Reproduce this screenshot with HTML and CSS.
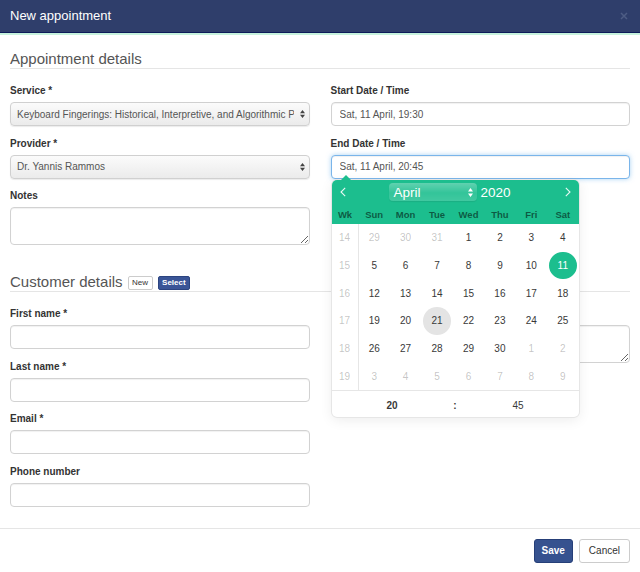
FILE: index.html
```html
<!DOCTYPE html>
<html lang="en">
<head>
<meta charset="utf-8">
<title>New appointment</title>
<link rel="stylesheet" href="styles.css">
</head>
<body>
<div class="modal">
  <header class="modal-header">
    <h1 class="modal-title">New appointment</h1>
    <button class="close" type="button" aria-label="Close">
      <svg width="8" height="8" viewBox="0 0 8 8"><path d="M1 1L7 7M7 1L1 7" stroke="#4d5c84" stroke-width="1.5" fill="none"/></svg>
    </button>
  </header>
  <div class="modal-body">
    <section class="section">
      <h2 class="section-title">Appointment details</h2>
      <div class="row">
        <div class="col">
          <div class="group">
            <label class="label">Service *</label>
            <div class="select-wrap">
              <select class="control select">
                <option>Keyboard Fingerings: Historical, Interpretive, and Algorithmic Perspectives</option>
              </select>
              <svg class="select-arrows" width="5" height="8" viewBox="0 0 5 8"><path d="M0 3.2L2.5 0L5 3.2Z M0 4.8L2.5 8L5 4.8Z" fill="#444"/></svg>
            </div>
          </div>
          <div class="group">
            <label class="label">Provider *</label>
            <div class="select-wrap">
              <select class="control select">
                <option>Dr. Yannis Rammos</option>
              </select>
              <svg class="select-arrows" width="5" height="8" viewBox="0 0 5 8"><path d="M0 3.2L2.5 0L5 3.2Z M0 4.8L2.5 8L5 4.8Z" fill="#444"/></svg>
            </div>
          </div>
          <div class="group">
            <label class="label">Notes</label>
            <textarea class="control textarea"></textarea>
          </div>
        </div>
        <div class="col">
          <div class="group">
            <label class="label">Start Date / Time</label>
            <input class="control" type="text" value="Sat, 11 April, 19:30">
          </div>
          <div class="group group-picker">
            <label class="label">End Date / Time</label>
            <input class="control focus" type="text" value="Sat, 11 April, 20:45">
            <div class="cal">
              <div class="cal-months">
                <span class="cal-nav">
                  <svg width="6" height="10" viewBox="0 0 6 10"><path d="M5.2 0.8L1 5L5.2 9.2" stroke="#fff" stroke-width="1.1" fill="none" opacity="0.9"/></svg>
                </span>
                <div class="cal-current">
                  <span class="cal-month">April
                    <svg width="5" height="9" viewBox="0 0 5 9"><path d="M0 3.6L2.5 0L5 3.6Z M0 5.4L2.5 9L5 5.4Z" fill="#fff"/></svg>
                  </span>
                  <span class="cal-year">2020</span>
                </div>
                <span class="cal-nav">
                  <svg width="6" height="10" viewBox="0 0 6 10"><path d="M0.8 0.8L5 5L0.8 9.2" stroke="#fff" stroke-width="1.1" fill="none" opacity="0.9"/></svg>
                </span>
              </div>
              <div class="cal-grid cal-weekdays">
                <span>Wk</span><span>Sun</span><span>Mon</span><span>Tue</span><span>Wed</span><span>Thu</span><span>Fri</span><span>Sat</span>
              </div>
              <div class="cal-grid cal-days">
                <span class="wk">14</span><span class="day muted">29</span><span class="day muted">30</span><span class="day muted">31</span><span class="day">1</span><span class="day">2</span><span class="day">3</span><span class="day">4</span>
                <span class="wk">15</span><span class="day">5</span><span class="day">6</span><span class="day">7</span><span class="day">8</span><span class="day">9</span><span class="day">10</span><span class="day"><b class="dot selected">11</b></span>
                <span class="wk">16</span><span class="day">12</span><span class="day">13</span><span class="day">14</span><span class="day">15</span><span class="day">16</span><span class="day">17</span><span class="day">18</span>
                <span class="wk">17</span><span class="day">19</span><span class="day">20</span><span class="day"><b class="dot hover">21</b></span><span class="day">22</span><span class="day">23</span><span class="day">24</span><span class="day">25</span>
                <span class="wk">18</span><span class="day">26</span><span class="day">27</span><span class="day">28</span><span class="day">29</span><span class="day">30</span><span class="day muted">1</span><span class="day muted">2</span>
                <span class="wk">19</span><span class="day muted">3</span><span class="day muted">4</span><span class="day muted">5</span><span class="day muted">6</span><span class="day muted">7</span><span class="day muted">8</span><span class="day muted">9</span>
              </div>
              <div class="cal-time">
                <span class="cal-hour">20</span>
                <span class="cal-sep">:</span>
                <span class="cal-min">45</span>
              </div>
            </div>
          </div>
        </div>
      </div>
    </section>
    <section class="section section-customer">
      <h2 class="section-title">Customer details
        <button class="btn-xs" type="button">New</button>
        <button class="btn-xs btn-xs-primary" type="button">Select</button>
      </h2>
      <div class="row">
        <div class="col">
          <div class="group">
            <label class="label">First name *</label>
            <input class="control" type="text">
          </div>
          <div class="group">
            <label class="label">Last name *</label>
            <input class="control" type="text">
          </div>
          <div class="group">
            <label class="label">Email *</label>
            <input class="control" type="text">
          </div>
          <div class="group">
            <label class="label">Phone number</label>
            <input class="control" type="text">
          </div>
        </div>
        <div class="col">
          <div class="group">
            <label class="label">&nbsp;</label>
            <textarea class="control textarea" aria-label="Address"></textarea>
          </div>
        </div>
      </div>
    </section>
  </div>
  <footer class="modal-footer">
    <button class="btn btn-primary" type="button">Save</button>
    <button class="btn" type="button">Cancel</button>
  </footer>
</div>
</body>
</html>
```

FILE: styles.css
```css
html, body {
  margin: 0;
  padding: 0;
  background: #fff;
}

body {
  font-family: "Liberation Sans", Arial, Helvetica, sans-serif;
  color: #333;
  width: 640px;
  height: 572px;
  overflow: hidden;
}

.modal {
  width: 640px;
  display: flex;
  flex-direction: column;
}

.modal-header {
  height: 32px;
  background: #2f3e6b;
  border-bottom: 1px solid #0d1a59;
  display: flex;
  align-items: center;
  justify-content: space-between;
  padding: 0 12px 0 10px;
}

.modal-title {
  margin: 0;
  font-size: 13px;
  font-weight: normal;
  color: #fff;
  line-height: 16px;
}

.close {
  border: 0;
  background: none;
  padding: 0;
  width: 8px;
  height: 8px;
  display: flex;
}

.modal-body {
  border-top: 2px solid #c6f2dd;
  padding: 14px 10px 10px;
}

.section-customer {
  margin-top: 16px;
}

.section-title {
  margin: 0 0 15px;
  font-size: 15px;
  line-height: 19px;
  font-weight: normal;
  color: #555;
  border-bottom: 1px solid #e5e5e5;
  display: flex;
  align-items: flex-end;
}

.btn-xs {
  height: 14px;
  margin: 0 0 1px 5px;
  padding: 0 3.5px;
  font-family: inherit;
  font-size: 8px;
  line-height: 12px;
  color: #333;
  background: #fff;
  border: 1px solid #ccc;
  border-radius: 2px;
}

.btn-xs-primary {
  background: #3a5597;
  border-color: #2c4480;
  color: #fff;
  font-weight: bold;
}

.row {
  display: grid;
  grid-template-columns: 1fr 1fr;
  column-gap: 21px;
}

.col {
  min-width: 0;
}

.group {
  margin-bottom: 10.7px;
}

.group-picker {
  position: relative;
}

.label {
  display: block;
  font-size: 10px;
  line-height: 14px;
  font-weight: bold;
  color: #333;
  margin-bottom: 4px;
}

.control {
  display: block;
  width: 100%;
  height: 24px;
  box-sizing: border-box;
  margin: 0;
  padding: 0 8px;
  font-family: inherit;
  font-size: 10px;
  color: #555;
  background: #fff;
  border: 1px solid #d2d2d2;
  border-radius: 4px;
  box-shadow: inset 0 1px 1px rgba(0, 0, 0, 0.06);
  outline: none;
}

.control.focus {
  border-color: #7ab5ea;
  box-shadow: inset 0 1px 1px rgba(0, 0, 0, 0.06), 0 0 5px rgba(102, 175, 233, 0.55);
}

.textarea {
  height: 38px;
  padding: 4px 8px;
}

.select-wrap {
  position: relative;
}

.select {
  -webkit-appearance: none;
  appearance: none;
  padding: 0 15px 0 6px;
  background: linear-gradient(#fbfbfb, #ebebeb);
  border-color: #d0d0d0;
  box-shadow: 0 1px 1px rgba(0, 0, 0, 0.08);
}

.select-arrows {
  position: absolute;
  right: 5px;
  top: 8px;
  pointer-events: none;
}

/* Calendar popup */
.cal {
  position: absolute;
  top: calc(100% + 1.3px);
  left: 1px;
  width: 247px;
  background: #fff;
  border-radius: 5px;
  box-shadow: 1px 0 0 #e6e6e6, -1px 0 0 #e6e6e6, 0 1px 0 #e6e6e6, 0 -1px 0 #e6e6e6, 0 3px 13px rgba(0, 0, 0, 0.08);
  z-index: 10;
}

.cal::before {
  content: "";
  position: absolute;
  top: -5px;
  left: 9px;
  border-left: 5px solid transparent;
  border-right: 5px solid transparent;
  border-bottom: 5px solid #1cbe8e;
}

.cal-months {
  height: 25px;
  background: #1cbe8e;
  border-radius: 5px 5px 0 0;
  display: flex;
  align-items: center;
  color: #fff;
}

.cal-nav {
  width: 22px;
  display: flex;
  justify-content: center;
}

.cal-current {
  flex: 1;
  display: flex;
  justify-content: center;
  align-items: center;
  gap: 4px;
}

.cal-month {
  width: 88px;
  height: 18px;
  box-sizing: border-box;
  padding: 0 4px 0 5px;
  border-radius: 4px;
  background: linear-gradient(rgba(255, 255, 255, 0.3), rgba(255, 255, 255, 0.1) 55%, rgba(255, 255, 255, 0.16));
  box-shadow: 0 1px 1px rgba(0, 0, 0, 0.08);
  font-size: 13.5px;
  display: flex;
  align-items: center;
  justify-content: space-between;
}

.cal-year {
  width: 41px;
  font-size: 13.5px;
}

.cal-grid {
  display: grid;
  grid-template-columns: 27px repeat(7, 1fr);
}

.cal-weekdays {
  height: 19px;
  background: #1cbe8e;
  align-items: center;
  text-align: center;
  font-size: 9.5px;
  font-weight: bold;
  color: rgba(0, 0, 0, 0.55);
}

.cal-days {
  grid-auto-rows: 27.7px;
  font-size: 10px;
  color: #393939;
}

.cal-days > span {
  display: flex;
  align-items: center;
  justify-content: center;
}

.wk {
  color: rgba(57, 57, 57, 0.3);
  border-right: 1px solid #e6e6e6;
}

.muted {
  color: rgba(57, 57, 57, 0.3);
}

.dot {
  width: 27.5px;
  height: 27.5px;
  border-radius: 50%;
  display: flex;
  align-items: center;
  justify-content: center;
  font-weight: normal;
}

.dot.selected {
  background: #1cbe8e;
  color: #fff;
}

.dot.hover {
  background: #e4e4e4;
}

.cal-time {
  height: 27px;
  box-sizing: border-box;
  padding-top: 2px;
  border-top: 1px solid #e6e6e6;
  display: flex;
  align-items: center;
  font-size: 10px;
  color: #393939;
}

.cal-hour {
  flex: 1;
  text-align: center;
  font-weight: bold;
}

.cal-sep {
  width: 5px;
  text-align: center;
  font-weight: bold;
}

.cal-min {
  flex: 1;
  text-align: center;
}

/* Footer */
.modal-footer {
  border-top: 1px solid #e5e5e5;
  padding: 10px 10px 9px;
  display: flex;
  justify-content: flex-end;
  gap: 6px;
}

.btn {
  height: 24px;
  padding: 0 9px;
  font-family: inherit;
  font-size: 10px;
  color: #333;
  background: #fff;
  border: 1px solid #ccc;
  border-radius: 3px;
}

.btn-primary {
  padding: 0 7px;
  background: #36528f;
  border-color: #263f78;
  color: #fff;
  font-weight: bold;
}
```
